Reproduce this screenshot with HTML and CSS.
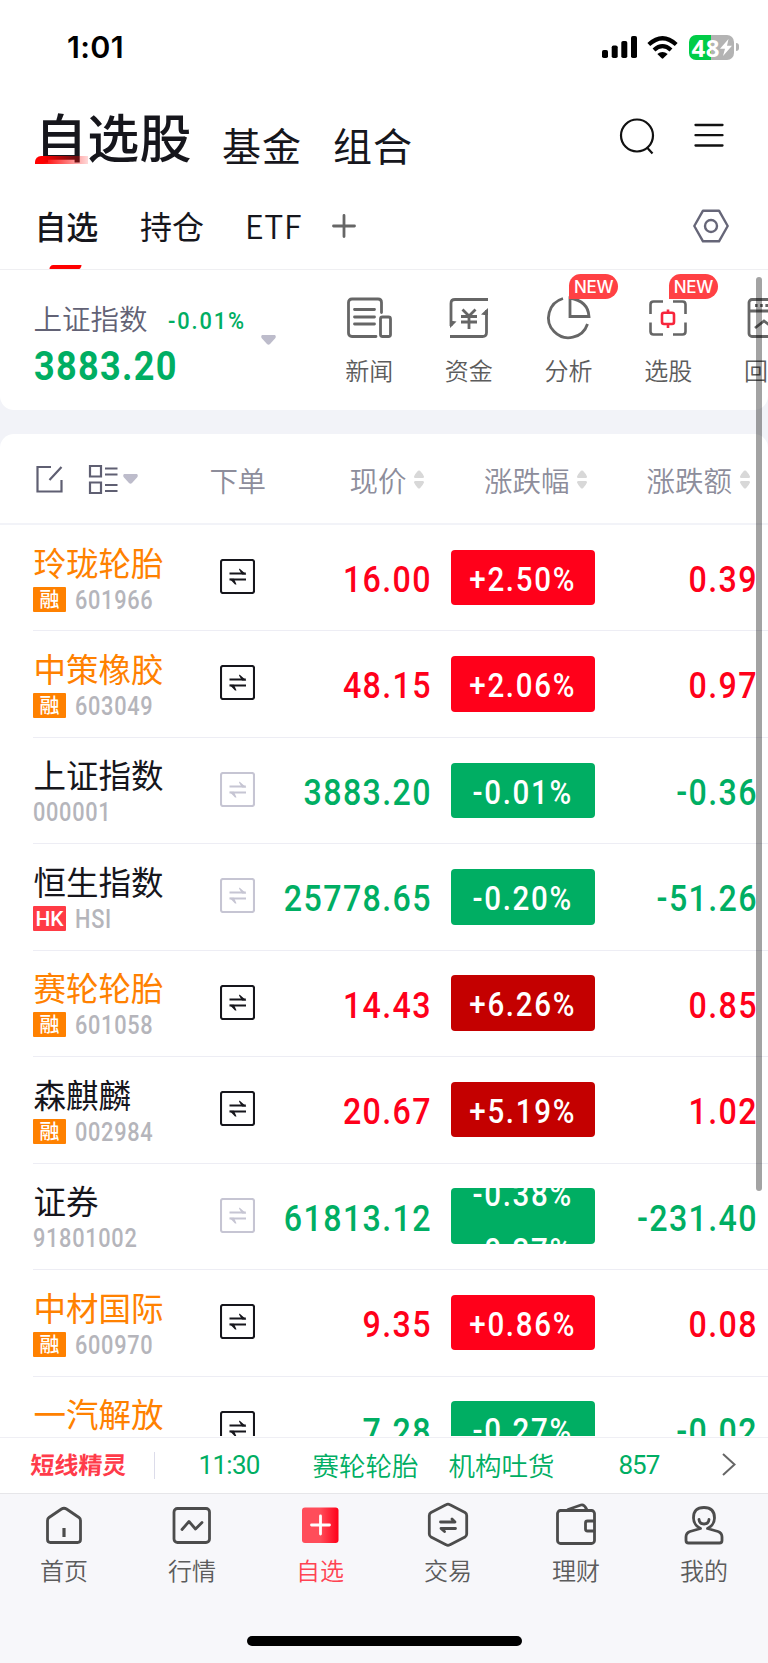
FILE: index.html
```html
<!DOCTYPE html>
<html lang="zh-CN">
<head>
<meta charset="utf-8">
<title>自选股</title>
<link rel="stylesheet" href="styles.css">
</head>
<body>
<svg class="defs" width="0" height="0" aria-hidden="true">
  <symbol id="swap" viewBox="0 0 35 35">
    <rect x="1" y="1" width="33" height="33" rx="2" fill="none" stroke="currentColor" stroke-width="2.100"/>
    <path d="M9.500 14.600H25.800M9.500 20.600H26" fill="none" stroke="currentColor" stroke-width="2"/>
    <path d="M19.500 9.500L26.300 15.500H22L19 10.500ZM9.500 19.700H14L16.500 25.500H15Z" fill="currentColor"/>
  </symbol>
  <symbol id="sort" viewBox="0 0 10 19">
    <path d="M1 8Q0 8 0 6.500Q1 4 4 .8Q5 0 6 .8Q9 4 10 6.500Q10 8 9 8ZM1 11Q0 11 0 12.500Q1 15 4 18.200Q5 19 6 18.200Q9 15 10 12.500Q10 11 9 11Z" fill="#d8d8d8"/>
  </symbol>
  <symbol id="caret" viewBox="0 0 15 10">
    <path d="M1 0H14Q15.500 1.500 14 3.500L9 9Q7.500 10.500 6 9L1 3.500Q-.5 1.500 1 0Z" fill="#bdbccb"/>
  </symbol>
</svg>
<div class="phone">
  <div class="status">
    <span class="clock">1:01</span>
    <svg class="signal" viewBox="0 0 35 22"><rect y="14" width="6" height="8" rx="1.800"/><rect x="9.700" y="9.500" width="6" height="12.500" rx="1.800"/><rect x="19.300" y="5" width="6" height="17" rx="1.800"/><rect x="29" width="6" height="22" rx="1.800"/></svg>
    <svg class="wifi" viewBox="0 0 31 23"><g fill="none" stroke="#000" stroke-width="4.200"><path d="M1.800 8.500Q15.500 -4 29.200 8.500"/><path d="M7 14Q15.500 6.300 24 14"/></g><path d="M10.300 18Q15.500 13.800 20.700 18L16.300 22.300Q15.500 23 14.700 22.300Z"/></svg>
    <div class="battery"><span>48</span><svg viewBox="0 0 12 17"><path d="M8.500 0L0 9.800H5L3 17L12 6.800H7Z" fill="#fff"/></svg></div>
    <i class="battery-cap"></i>
  </div>

  <header class="top">
    <h1 class="title">自选股</h1>
    <span class="section">基金</span>
    <span class="section">组合</span>
    <svg class="search" viewBox="0 0 35 37" fill="none" stroke="#111" stroke-width="2.200"><circle cx="17" cy="17.500" r="16"/><path d="M27 29.500L32.500 35.500"/></svg>
    <svg class="menu" viewBox="0 0 30 25" stroke="#111" stroke-width="2.300"><path d="M1.500 2H28.500M1.500 12.200H28.500M1.500 22.500H28.500" stroke-linecap="round"/></svg>
  </header>

  <nav class="tabs">
    <span class="tab on">自选</span>
    <span class="tab hold">持仓</span>
    <span class="tab etf">ETF</span>
    <svg class="plus" viewBox="0 0 24 24" stroke="#666" stroke-width="2.800" stroke-linecap="round"><path d="M1.500 12H22.500M12 1.500V22.500"/></svg>
    <svg class="gear" viewBox="0 0 36 34" fill="none" stroke="#666678" stroke-width="2.400" stroke-linejoin="round"><path d="M1.300 17L10 1.700H26L34.700 17L26 32.300H10Z"/><circle cx="18" cy="17" r="6"/></svg>
  </nav>

  <section class="summary">
    <div class="index">
      <div class="index-line"><span class="index-name">上证指数</span><span class="index-pct">-0.01%</span></div>
      <div class="index-value">3883.20</div>
    </div>
    <svg class="caret big"><use href="#caret"/></svg>
    <div class="quick">
      <div class="q">
        <svg viewBox="0 0 46 44" fill="none" stroke="#666" stroke-width="2.800" stroke-linecap="round"><path d="M30 39.500H6Q2.500 39.500 2.500 36V5.500Q2.500 2 6 2H32Q35.500 2 35.500 5.500V15.500M8.500 12.500H28.500M8.500 20H28.500M8.500 27H28.500"/><rect x="34.500" y="20" width="10" height="19.500" rx="2"/></svg>
        <span>新闻</span>
      </div>
      <div class="q">
        <svg viewBox="0 0 46 44" fill="none" stroke="#666" stroke-width="2.800"><path d="M42 2.500H9Q5 2.500 5 6.500V29M4 39.500H36.500Q40.500 39.500 40.500 35.500V13"/><path d="M4 31V24H7L10.500 24.500ZM42 11V18H38.500L35 17.500Z" fill="#666" stroke="none"/><path d="M16.500 12.500L23 19L29.500 12.500M15 19.500H31M15 25H31M23 19V32"/></svg>
        <span>资金</span>
      </div>
      <div class="q">
        <svg viewBox="0 0 46 44" fill="none" stroke="#666" stroke-width="2.800"><path d="M17 1.500A20 20 0 1 0 41.500 27"/><path d="M24 1V19.500H43Q42 4 24 1Z"/></svg>
        <span>分析</span>
        <b class="new">NEW</b>
      </div>
      <div class="q">
        <svg viewBox="0 0 46 44" fill="none" stroke="#666" stroke-width="2.600"><path d="M5.500 17V7.500Q5.500 4.500 8.500 4.500H18M28 4.500H37.500Q40.500 4.500 40.500 7.500V17M40.500 25.500V34.500Q40.500 37.500 37.500 37.500H28M18 37.500H8.500Q5.500 37.500 5.500 34.500V25.500"/><path stroke="#f7263c" d="M19 15.800H27Q29 15.800 29 17.800V25Q29 27 27 27H19Q17 27 17 25V17.800Q17 15.800 19 15.800ZM23 12.500V16M23 27V31"/></svg>
        <span>选股</span>
        <b class="new">NEW</b>
      </div>
      <div class="q">
        <svg viewBox="0 0 46 44" fill="none" stroke="#666" stroke-width="2.800"><rect x="4" y="2.500" width="37" height="37" rx="3"/><path d="M4 14H41M10 31L19 24L27 30L36 22"/><path d="M10 8.500H36" stroke-dasharray="2.600 2.600"/></svg>
        <span>回测</span>
      </div>
    </div>
  </section>

  <section class="list">
    <div class="head">
      <svg class="edit" viewBox="0 0 27 28" fill="none" stroke="#5f5f72" stroke-width="2.200"><path d="M15 2H1.500V26.500H25.500V15M13.500 15L25.500 2"/></svg>
      <svg class="view" viewBox="0 0 29 29" fill="none" stroke="#5f5f72" stroke-width="2.200"><path d="M1 1H12V11.500H1ZM1 17.500H12V28H1ZM16 3.500H28.500M16 9.500H28.500M16 20H28.500M16 26H28.500"/></svg>
      <svg class="caret"><use href="#caret"/></svg>
      <span class="h-order">下单</span>
      <span class="h-col h-price">现价<svg><use href="#sort"/></svg></span>
      <span class="h-col h-pct">涨跌幅<svg><use href="#sort"/></svg></span>
      <span class="h-col h-chg">涨跌额<svg><use href="#sort"/></svg></span>
    </div>
    <div class="rows">
      <div class="row up"><div class="stock"><div class="name margin">玲珑轮胎</div><div class="code"><i class="tag">融</i><span>601966</span></div></div><svg class="swap"><use href="#swap"/></svg><div class="price">16.00</div><div class="pct"><span>+2.50%</span></div><div class="chg">0.39</div></div>
      <div class="row up"><div class="stock"><div class="name margin">中策橡胶</div><div class="code"><i class="tag">融</i><span>603049</span></div></div><svg class="swap"><use href="#swap"/></svg><div class="price">48.15</div><div class="pct"><span>+2.06%</span></div><div class="chg">0.97</div></div>
      <div class="row down"><div class="stock"><div class="name">上证指数</div><div class="code bare"><span>000001</span></div></div><svg class="swap off"><use href="#swap"/></svg><div class="price">3883.20</div><div class="pct"><span>-0.01%</span></div><div class="chg">-0.36</div></div>
      <div class="row down"><div class="stock"><div class="name">恒生指数</div><div class="code"><i class="tag hk">HK</i><span>HSI</span></div></div><svg class="swap off"><use href="#swap"/></svg><div class="price">25778.65</div><div class="pct"><span>-0.20%</span></div><div class="chg">-51.26</div></div>
      <div class="row up strong"><div class="stock"><div class="name margin">赛轮轮胎</div><div class="code"><i class="tag">融</i><span>601058</span></div></div><svg class="swap"><use href="#swap"/></svg><div class="price">14.43</div><div class="pct"><span>+6.26%</span></div><div class="chg">0.85</div></div>
      <div class="row up strong"><div class="stock"><div class="name">森麒麟</div><div class="code"><i class="tag">融</i><span>002984</span></div></div><svg class="swap"><use href="#swap"/></svg><div class="price">20.67</div><div class="pct"><span>+5.19%</span></div><div class="chg">1.02</div></div>
      <div class="row down"><div class="stock"><div class="name">证券</div><div class="code bare"><span>91801002</span></div></div><svg class="swap off"><use href="#swap"/></svg><div class="price">61813.12</div><div class="pct rolling"><span>-0.38%</span><span>-0.37%</span></div><div class="chg">-231.40</div></div>
      <div class="row up"><div class="stock"><div class="name margin">中材国际</div><div class="code"><i class="tag">融</i><span>600970</span></div></div><svg class="swap"><use href="#swap"/></svg><div class="price">9.35</div><div class="pct"><span>+0.86%</span></div><div class="chg">0.08</div></div>
      <div class="row down"><div class="stock"><div class="name margin">一汽解放</div></div><svg class="swap"><use href="#swap"/></svg><div class="price">7.28</div><div class="pct"><span>-0.27%</span></div><div class="chg">-0.02</div></div>
    </div>
  </section>

  <div class="ticker">
    <span class="brand">短线精灵</span>
    <i class="bar"></i>
    <span class="t-num t-time">11:30</span>
    <span class="t-name">赛轮轮胎</span>
    <span class="t-event">机构吐货</span>
    <span class="t-num t-count">857</span>
    <svg class="chev" viewBox="0 0 14 23" fill="none" stroke="#666" stroke-width="2"><path d="M1 1L12.500 11.500L1 22"/></svg>
  </div>

  <footer class="dock">
    <div class="d"><svg viewBox="0 0 46 46"><path d="M8 14.500L20.500 6Q23 4.500 25.500 6L38 14.500Q39.500 15.500 39.500 17.500V36.500Q39.500 39.500 36.500 39.500H9.500Q6.500 39.500 6.500 36.500V17.500Q6.500 15.500 8 14.500Z"/><path d="M23 25V34" stroke-linecap="butt" stroke-width="3.200"/></svg><span>首页</span></div>
    <div class="d"><svg viewBox="0 0 46 46"><rect x="5" y="5.500" width="35.500" height="34" rx="3.500"/><path d="M13 26.500L20 18.500L26.500 26L33 19.500"/></svg><span>行情</span></div>
    <div class="d on"><svg viewBox="0 0 46 46"><defs><linearGradient id="g"><stop offset="0.500" stop-color="#ff4d5a"/><stop offset="1" stop-color="#ff0019"/></linearGradient></defs><rect x="5" y="4.500" width="36.500" height="35.500" rx="3" fill="url(#g)" stroke="none"/><path d="M14.500 22H32.500M23.500 13V31" stroke="#fff"/></svg><span>自选</span></div>
    <div class="d"><svg viewBox="0 0 46 46"><path d="M21 1.800Q23 .5 25 1.800L40 9.500Q41.700 10.500 41.700 12.500V31Q41.700 33 40 34L25 41.700Q23 43 21 41.700L6 34Q4.300 33 4.300 31V12.500Q4.300 10.500 6 9.500Z"/><path d="M15.500 19H30L27 16M30.500 25.500H16L19.500 28.500"/></svg><span>交易</span></div>
    <div class="d"><svg viewBox="0 0 46 46"><rect x="4.500" y="7.500" width="37" height="33" rx="3"/><path d="M15 6.500L28 2Q31 1 33.500 6M41 18H34.500Q32.500 18 32.500 20V26Q32.500 28 34.500 28H41"/></svg><span>理财</span></div>
    <div class="d"><svg viewBox="0 0 46 46"><path d="M19.500 25.500Q12.500 22 12.500 15Q12.500 4.500 23 4.500T33.500 15Q33.500 22 26.500 25.500L37 28.500Q41 30 41 34V37.500Q41 40 38.500 40H7.500Q5 40 5 37.500V34Q5 30 9 28.500ZM18 16.500Q18.500 21 23 21T28 16.500"/></svg><span>我的</span></div>
  </footer>
  <div class="home-indicator"></div>
  <div class="scrollbar"></div>
</div>
</body>
</html>
```
FILE: styles.css
```css
* { box-sizing: border-box; }
body { margin: 0; background: #f7f7fa; }
i, b { font-style: normal; }
svg { display: block; flex: none; overflow: visible; }
.defs { position: absolute; }

.phone {
  position: relative;
  display: flex;
  flex-direction: column;
  width: 768px;
  height: 1663px;
  overflow: hidden;
  background: linear-gradient(#fff 1490px, #f7f7fa 1490px);
  color: #16161c;
  font-family: "Noto Sans CJK SC", sans-serif;
  font-weight: 350;
  white-space: nowrap;
}

/* status bar */
.status { flex: none; display: flex; align-items: center; height: 94px; padding-left: 67px; }
.clock { width: 534.500px; font: 600 30.500px/30px Inter, sans-serif; letter-spacing: .3px; color: #000; }
.signal { width: 35px; height: 22px; }
.wifi { width: 31px; height: 23px; margin-left: 10.500px; }
.battery {
  display: flex; align-items: center; width: 45px; height: 25px; margin-left: 11px; padding-left: 2.500px;
  border-radius: 7px; background: linear-gradient(90deg, #00cc47 49%, #b3b3b3 49%);
  color: #fff; font: 700 24px/25px "Open Sans", sans-serif; letter-spacing: .5px;
}
.battery svg { width: 12px; height: 17px; }
.battery-cap { width: 2.500px; height: 8px; margin-left: 2px; border-radius: 0 4px 4px 0; background: #b3b3b3; }

/* page header */
.top { flex: none; display: flex; height: 94px; padding-left: 35px; }
.title { position: relative; width: 187px; height: 54px; margin: 15px 0 0; font-size: 52px; line-height: 53px; font-weight: 500; letter-spacing: .3px; }
.title::after {
  content: ""; position: absolute; left: 0; top: 47px; width: 53px; height: 8px;
  border-radius: 6px 0 0 0; background: linear-gradient(90deg, #f00 15%, rgba(255, 0, 0, .15));
}
.section { width: 111px; margin-top: 30px; font-size: 39px; line-height: 40px; font-weight: 400; letter-spacing: .9px; }
.search { width: 35px; height: 37px; margin: 24px 0 0 175.500px; }
.menu { width: 30px; height: 25px; margin: 29px 0 0 39.500px; }

/* tabs */
.tabs { flex: none; display: flex; height: 82px; padding: 21px 0 0 35px; border-bottom: 1px solid #efeff2; font-size: 32px; line-height: 32px; font-weight: 400; }
.tab { width: 105px; }
.tab.on { position: relative; text-indent: -.5px; font-weight: 500; letter-spacing: -.3px; }
.tab.on::after {
  content: ""; position: absolute; left: 15px; top: 56px; width: 31px; height: 4px;
  border-radius: 2px 1px 1px 1px; transform: skewX(-25deg); background: #f00;
}
.tab.etf { width: 85px; font-weight: 350; letter-spacing: .6px; }
.plus { width: 24px; height: 24px; margin: 5px 0 0 2px; }
.gear { width: 36px; height: 34px; margin: 0 0 0 336.500px; }

/* index card and shortcuts */
.summary { position: relative; flex: none; display: flex; height: 139.500px; background: #fff; border-radius: 0 0 14px 14px; box-shadow: 0 14px 0 #f2f3f8; z-index: 1; }
.index { width: 261px; padding: 33px 0 0 33.500px; }
.index-line { display: flex; height: 29px; }
.index-name { width: 134.500px; color: #626275; font-size: 28.500px; line-height: 29px; }
.index-pct { padding-top: 5.500px; color: #00ae63; font: 500 24.500px/24px Roboto, sans-serif; letter-spacing: 2.100px; transform: scaleX(.89); transform-origin: 0 0; }
.index-value { margin-top: 12.500px; color: #00ae63; font: 700 41.500px/41px Roboto, sans-serif; letter-spacing: 1.500px; transform: scaleX(.87); transform-origin: 0 0; }
.caret { width: 15px; height: 10px; }
.caret.big { margin-top: 64.500px; }
.quick { display: flex; width: 492px; padding-left: 43.300px; overflow: hidden; }
.q { position: relative; flex: none; width: 99.700px; padding-top: 26.500px; color: #5c5c5c; font-size: 24px; line-height: 24px; text-align: center; }
.q > svg { width: 46px; height: 44px; margin: 0 auto; }
.q > span { display: block; margin-top: 17px; }
.new {
  position: absolute; left: 50.200px; top: 4px; width: 49.500px; height: 25px; border-radius: 12px 13px 13px 0;
  background: #ff4144; color: #fff; font: 500 17px/26px Inter, sans-serif; letter-spacing: -.3px; text-align: center;
}

/* watch list */
.list { position: relative; flex: none; height: 1027px; overflow: hidden; background: #fff; border-top: 24.500px solid #f2f3f8; border-bottom: 1px solid #fff; }
.head {
  display: flex; height: 91.500px; padding: 31px 0 0 35.500px; border-bottom: 2px solid #f2f3f8;
  box-shadow: 0 0 0 16px #f2f3f8; border-radius: 14px 14px 0 0;
  color: #8d8d9b; font-size: 28.500px; line-height: 29px;
}
.edit { width: 27px; height: 28px; }
.view { width: 29px; height: 29px; margin-left: 26.500px; }
.head .caret { margin: 9.500px 0 0 5px; }
.h-order { margin-left: 71.500px; letter-spacing: -.5px; }
.h-col { display: flex; gap: 7.500px; }
.h-col svg { width: 10px; height: 19px; margin-top: 5px; }
.h-price { margin-left: 84px; }
.h-pct { margin-left: 60px; }
.h-chg { margin-left: 59.500px; }
.rows { position: relative; height: 920px; padding-left: 33px; background: #fff; }
.row { display: flex; height: 106.450px; border-bottom: 1.500px solid #ededf4; }
.stock { width: 187px; padding-top: 20.500px; }
.name { padding-left: .6px; font-size: 32.500px; line-height: 32px; font-weight: 400; }
.name.margin { color: #ff8100; }
.code { display: flex; height: 25px; margin-top: 9px; color: #b5b5bb; font: 500 25px/27px Roboto, sans-serif; letter-spacing: .8px; }
.code span { transform: scaleX(.87); transform-origin: 0 0; }
.tag {
  width: 33px; height: 25px; margin-right: 8.500px; border-radius: 1px; background: #ff8100; color: #fff; text-align: center;
  font: 500 20px/23px "Noto Sans CJK SC", sans-serif; letter-spacing: 0;
}
.tag.hk { background: #ff3b45; font: 500 21px/26px Roboto, sans-serif; }
.swap { width: 35px; height: 35px; margin-top: 34px; color: #16161c; }
.swap.off { color: #c6c5d3; }
.price, .chg { text-align: right; font: 500 37px/37px Roboto, sans-serif; letter-spacing: 1.600px; padding-top: 36px; transform: scaleX(.87); transform-origin: 100% 0; }
.price { width: 177px; }
.chg { width: 163px; }
.pct {
  width: 143.500px; height: 55.500px; margin: 24.700px 0 0 19px; border-radius: 4px; overflow: hidden;
  color: #fff; font: 500 33px/60px Roboto, sans-serif; text-align: center; letter-spacing: 1.900px;
}
.pct span { display: block; transform: scaleX(.895); }
.up { color: #ff001a; }
.up .name:not(.margin), .down .name:not(.margin) { color: #16161c; }
.down { color: #00ae63; }
.up .pct { background: #ff001a; }
.strong .pct { background: #c40000; }
.down .pct { background: #00ae63; }
.pct.rolling span { height: 56px; transform: translateY(-23.500px) scaleX(.895); }

/* live ticker */
.ticker { flex: none; display: flex; height: 57px; border-top: 1.500px solid #efeff4; border-bottom: 1px solid #e6e6e9; background: #fff; color: #00ae63; font-size: 26.500px; line-height: 27px; padding: 13px 0 0 29.500px; }
.brand { width: 124px; color: #ff3b4a; font-size: 24px; font-weight: 700; line-height: 25px; transform: skewX(-3deg); }
.bar { width: 1px; height: 27px; margin-top: 1px; background: #dcdcea; }
.t-num { font: 400 26px/28px Roboto, sans-serif; }
.t-time { width: 158px; padding-left: 44px; letter-spacing: -.7px; }
.t-name { width: 136px; }
.t-event { width: 170px; }
.t-count { width: 103px; letter-spacing: -1px; }
.chev { width: 14px; height: 23px; margin-top: 2px; }

/* bottom navigation */
.dock { flex: none; display: flex; height: 142px; background: #f7f7fa; }
.d { width: 128px; padding-top: 9px; font-size: 24px; line-height: 24px; text-align: center; color: #5c5c5c; }
.d svg { width: 46px; height: 46px; margin: 0 auto 9px; fill: none; stroke: #4c4c4c; stroke-width: 2.800; stroke-linecap: round; stroke-linejoin: round; }
.d.on { color: #ff4352; }
.home-indicator { flex: none; align-self: center; width: 275px; height: 10.500px; border-radius: 6px; background: #000; }
.scrollbar { position: absolute; z-index: 2; left: 755.700px; top: 277px; width: 6px; height: 914px; border-radius: 3px; background: rgba(0, 0, 0, .36); }
```
